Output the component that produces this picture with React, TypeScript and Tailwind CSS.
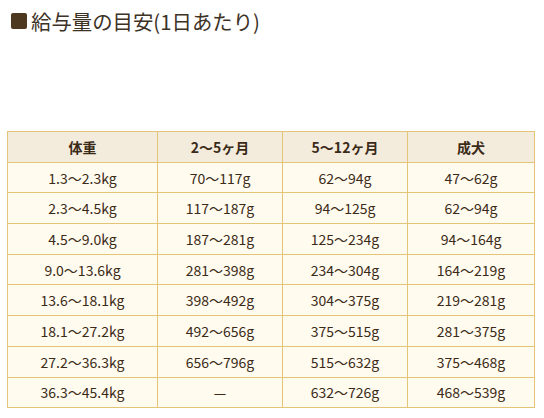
import React from 'react';

const HEADERS = ['体重', '2～5ヶ月', '5～12ヶ月', '成犬'];

const ROWS = [
  ['1.3～2.3kg', '70～117g', '62～94g', '47～62g'],
  ['2.3～4.5kg', '117～187g', '94～125g', '62～94g'],
  ['4.5～9.0kg', '187～281g', '125～234g', '94～164g'],
  ['9.0～13.6kg', '281～398g', '234～304g', '164～219g'],
  ['13.6～18.1kg', '398～492g', '304～375g', '219～281g'],
  ['18.1～27.2kg', '492～656g', '375～515g', '281～375g'],
  ['27.2～36.3kg', '656～796g', '515～632g', '375～468g'],
  ['36.3～45.4kg', '—', '632～726g', '468～539g'],
];

export default function App() {
  return (
    <div className="w-[544px] h-[418px] bg-white text-[#3b2a17] font-['Noto_Sans_CJK_JP','Noto_Sans',sans-serif]">
      {/* Title */}
      <div className="flex items-center gap-[4px] pl-[11px] pt-[7px]">
        <span className="w-[16px] h-[16px] rounded-[2px] bg-[#4d3820]" />
        <h2 className="text-[20.4px] leading-[28px] text-[#3d3226]">給与量の目安(1日あたり)</h2>
      </div>

      {/* Table */}
      <div className="pl-[7px] pt-[96px]">
        <table className="w-[527px] table-fixed border-collapse text-[14px]">
          <colgroup>
            <col className="w-[150px]" />
            <col className="w-[125px]" />
            <col className="w-[125px]" />
            <col className="w-[127px]" />
          </colgroup>
          <thead>
            <tr className="h-[30.7px] bg-[#f3ecdd]">
              {HEADERS.map((h) => (
                <th key={h} className="border border-[#e4c578] font-bold text-center leading-[20px] p-0">
                  {h}
                </th>
              ))}
            </tr>
          </thead>
          <tbody>
            {ROWS.map((row, i) => (
              <tr key={i} className="h-[30.7px] bg-[#fffbee]">
                {row.map((cell, j) => (
                  <td key={j} className="border border-[#e4c578] text-center leading-[20px] p-0">
                    {cell}
                  </td>
                ))}
              </tr>
            ))}
          </tbody>
        </table>
      </div>
    </div>
  );
}
